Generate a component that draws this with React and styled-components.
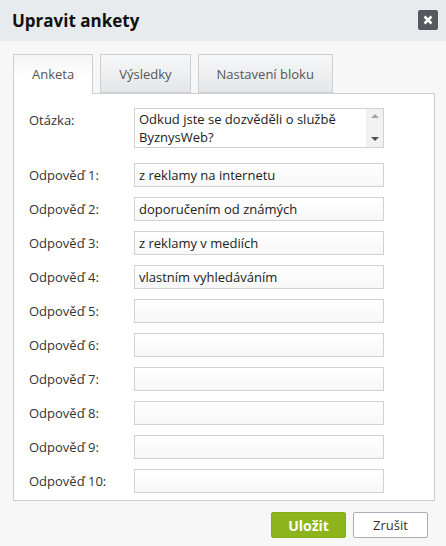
import React from "react";
import styled, { createGlobalStyle } from "styled-components";

const GlobalStyle = createGlobalStyle`
  html, body {
    margin: 0;
    padding: 0;
    background: #f7f7f7;
    font-family: "Open Sans", "Noto Sans", sans-serif;
  }
`;

const Dialog = styled.div`
  width: 446px;
  height: 546px;
  background: #f7f7f7;
  display: flex;
  flex-direction: column;
`;

const Header = styled.div`
  height: 41px;
  background: #e8ebee;
  display: flex;
  align-items: center;
  justify-content: space-between;
  padding: 0 8px 0 12px;
  box-sizing: border-box;
`;

const Title = styled.h1`
  margin: 0;
  font-size: 17px;
  font-weight: 700;
  color: #111;
  line-height: 1;
  margin-top: -1px;
`;

const CloseButton = styled.button`
  width: 20px;
  height: 20px;
  border: 0;
  border-radius: 2px;
  background: #55595d;
  display: flex;
  align-items: center;
  justify-content: center;
  padding: 0;
  margin-top: -2px;
`;

const Body = styled.div`
  padding: 13px 11px 0 13px;
`;

const Tabs = styled.div`
  display: flex;
  gap: 7px;
  height: 39px;
  position: relative;
  z-index: 1;
`;

const Tab = styled.div`
  height: ${(p) => (p.$active ? "40px" : "39px")};
  box-sizing: border-box;
  padding: 0 ${(p) => p.$pad}px;
  border: 1px solid #cfcfcf;
  border-bottom: ${(p) => (p.$active ? "0" : "1px solid #cfcfcf")};
  background: ${(p) =>
    p.$active
      ? "linear-gradient(#f4f4f4, #ffffff 60%)"
      : "linear-gradient(#f6f7f8, #e4e7ea)"};
  color: #555;
  font-size: 13px;
  display: flex;
  align-items: center;
  justify-content: center;
  padding-bottom: ${(p) => (p.$active ? "1px" : "0")};
`;

const Panel = styled.div`
  background: #fff;
  border: 1px solid #cfcfcf;
  width: 422px;
  box-sizing: border-box;
  padding: 14px 0 7px 15px;
  display: flex;
  flex-direction: column;
  gap: 10px;
`;

const Row = styled.div`
  display: flex;
  align-items: ${(p) => (p.$top ? "flex-start" : "center")};
  margin-bottom: ${(p) => (p.$top ? "5px" : "0")};
`;

const Label = styled.label`
  width: 105px;
  font-size: 13px;
  color: #333;
  padding-top: ${(p) => (p.$top ? "3px" : "0")};
`;

const Input = styled.div`
  width: 250px;
  height: 24px;
  box-sizing: border-box;
  border: 1px solid #d2d2d2;
  background: linear-gradient(#ffffff, #f7f7f7);
  font-size: 13px;
  color: #222;
  padding: 0 4px;
  display: flex;
  align-items: center;
`;

const TextArea = styled.div`
  width: 250px;
  height: 40px;
  box-sizing: border-box;
  border: 1px solid #d2d2d2;
  display: flex;
  font-size: 13px;
  color: #222;
`;

const AreaText = styled.div`
  flex: 1;
  padding: 1px 4px;
  line-height: 18px;
`;

const Scroll = styled.div`
  width: 17px;
  background: #f1f1f1;
  display: flex;
  flex-direction: column;
  justify-content: space-between;
  align-items: center;
  padding: 5px 0 6px;
`;

const Arrow = styled.span`
  width: 0;
  height: 0;
  border-left: 4px solid transparent;
  border-right: 4px solid transparent;
  ${(p) =>
    p.$up
      ? "border-bottom: 4px solid #a3a3a3;"
      : "border-top: 4px solid #505050;"}
`;

const Footer = styled.div`
  display: flex;
  justify-content: flex-end;
  gap: 7px;
  padding: 11px 7px 0 0;
`;

const Button = styled.button`
  width: 75px;
  height: 26px;
  box-sizing: border-box;
  border-radius: 2px;
  font-family: "Open Sans", "Noto Sans", sans-serif;
  cursor: pointer;
  padding: 0;
  ${(p) =>
    p.$primary
      ? `
    background: #8db41b;
    border: 1px solid #86ab17;
    color: #fff;
    font-weight: 700;
    font-size: 14px;
  `
      : `
    background: #fff;
    border: 1px solid #a9afba;
    color: #333;
    font-size: 13px;
  `}
`;

const answers = [
  "z reklamy na internetu",
  "doporučením od známých",
  "z reklamy v mediích",
  "vlastním vyhledáváním",
  "",
  "",
  "",
  "",
  "",
  "",
];

export default function App() {
  return (
    <>
      <GlobalStyle />
      <Dialog>
        <Header>
          <Title>Upravit ankety</Title>
          <CloseButton>
            <svg width="10" height="10" viewBox="0 0 10 10">
              <path
                d="M1.5 1.5 L8.5 8.5 M8.5 1.5 L1.5 8.5"
                stroke="#fff"
                strokeWidth="2.6"
              />
            </svg>
          </CloseButton>
        </Header>
        <Body>
          <Tabs>
            <Tab $active $pad={18}>Anketa</Tab>
            <Tab $pad={18}>Výsledky</Tab>
            <Tab $pad={18}>Nastavení bloku</Tab>
          </Tabs>
          <Panel>
            <Row $top>
              <Label $top>Otázka:</Label>
              <TextArea>
                <AreaText>Odkud jste se dozvěděli o službě ByznysWeb?</AreaText>
                <Scroll>
                  <Arrow $up />
                  <Arrow />
                </Scroll>
              </TextArea>
            </Row>
            {answers.map((a, i) => (
              <Row key={i}>
                <Label>Odpověď {i + 1}:</Label>
                <Input>{a}</Input>
              </Row>
            ))}
          </Panel>
          <Footer>
            <Button $primary>Uložit</Button>
            <Button>Zrušit</Button>
          </Footer>
        </Body>
      </Dialog>
    </>
  );
}
